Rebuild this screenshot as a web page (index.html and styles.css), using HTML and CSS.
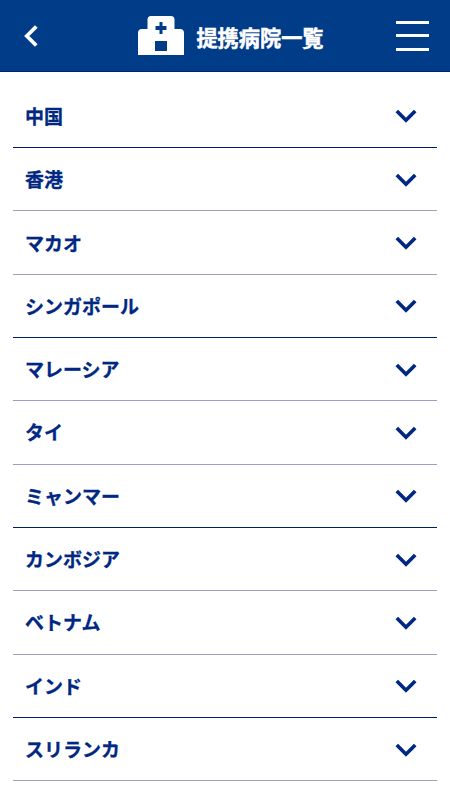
FILE: index.html
```html
<!DOCTYPE html>
<html lang="ja">
<head>
<meta charset="utf-8">
<meta name="viewport" content="width=device-width, initial-scale=1">
<title>提携病院一覧</title>
<link rel="stylesheet" href="styles.css">
</head>
<body>
<header class="bar">
<svg class="back" viewBox="0 0 14 22"><path d="M12.300 1.500 2.800 11l9.500 9.500"/></svg>
<div class="heading">
<svg class="hospital" viewBox="0 0 46 39"><path fill="#fff" fill-rule="evenodd" d="M13 0h20q3.500 0 3.500 3.500V13H42q4 0 4 4v22H0V17q0-4 4-4h5.500V3.500Q9.500 0 13 0ZM21.500 6v4h-4v4h4v4h3v-4h4v-4h-4V6ZM17 25v10h12V25Z"/></svg>
<h1>提携病院一覧</h1>
</div>
<div class="menu"><i></i><i></i><i></i></div>
</header>
<svg class="defs"><symbol id="chev" viewBox="0 0 22 14"><path d="m1.800 2 9.200 9.200L20.200 2"/></symbol></svg>
<ul class="list">
<li><span>中国</span><svg><use href="#chev"/></svg></li>
<li><span>香港</span><svg><use href="#chev"/></svg></li>
<li><span>マカオ</span><svg><use href="#chev"/></svg></li>
<li><span>シンガポール</span><svg><use href="#chev"/></svg></li>
<li><span>マレーシア</span><svg><use href="#chev"/></svg></li>
<li><span>タイ</span><svg><use href="#chev"/></svg></li>
<li><span>ミャンマー</span><svg><use href="#chev"/></svg></li>
<li><span>カンボジア</span><svg><use href="#chev"/></svg></li>
<li><span>ベトナム</span><svg><use href="#chev"/></svg></li>
<li><span>インド</span><svg><use href="#chev"/></svg></li>
<li><span>スリランカ</span><svg><use href="#chev"/></svg></li>
</ul>
</body>
</html>
```
FILE: styles.css
```css
* { box-sizing: border-box; }
body { margin: 0; height: 800px; overflow: hidden; background: #fff; font-family: "Noto Sans CJK JP", sans-serif; }
.bar { display: flex; align-items: center; justify-content: space-between; height: 72px; padding: 0 21px 0 24px; background: #003c88; border-bottom: 1px solid #002068; }
.back { width: 14px; height: 22px; fill: none; stroke: #fff; stroke-width: 3.8; }
.heading { display: flex; align-items: center; gap: 12px; margin-left: 28px; }
.hospital { width: 46px; height: 39px; }
h1 { margin: 0; padding-top: 2px; color: #fff; font-size: 21.200px; font-weight: 700; line-height: 32px; -webkit-text-stroke: 0.5px #fff; }
.menu { display: flex; flex-direction: column; justify-content: space-between; width: 33px; height: 30px; }
.menu i { height: 3px; background: #fff; }
.defs { display: none; }
.list { list-style: none; margin: 12.700px 13px 0; padding: 0; }
.list li { display: flex; align-items: center; justify-content: space-between; height: 63.333px; padding: 1px 20px 0 12px; border-bottom: 1px solid #a09dc0; color: #002882; font-size: 19px; font-weight: 700; -webkit-text-stroke: 0.3px #002882; }
.list li:nth-child(3n+1) { border-color: #001c6c; }
.list span { margin-top: -2px; }
.list svg { width: 22px; height: 14px; fill: none; stroke: #002882; stroke-width: 3.700; }
```
